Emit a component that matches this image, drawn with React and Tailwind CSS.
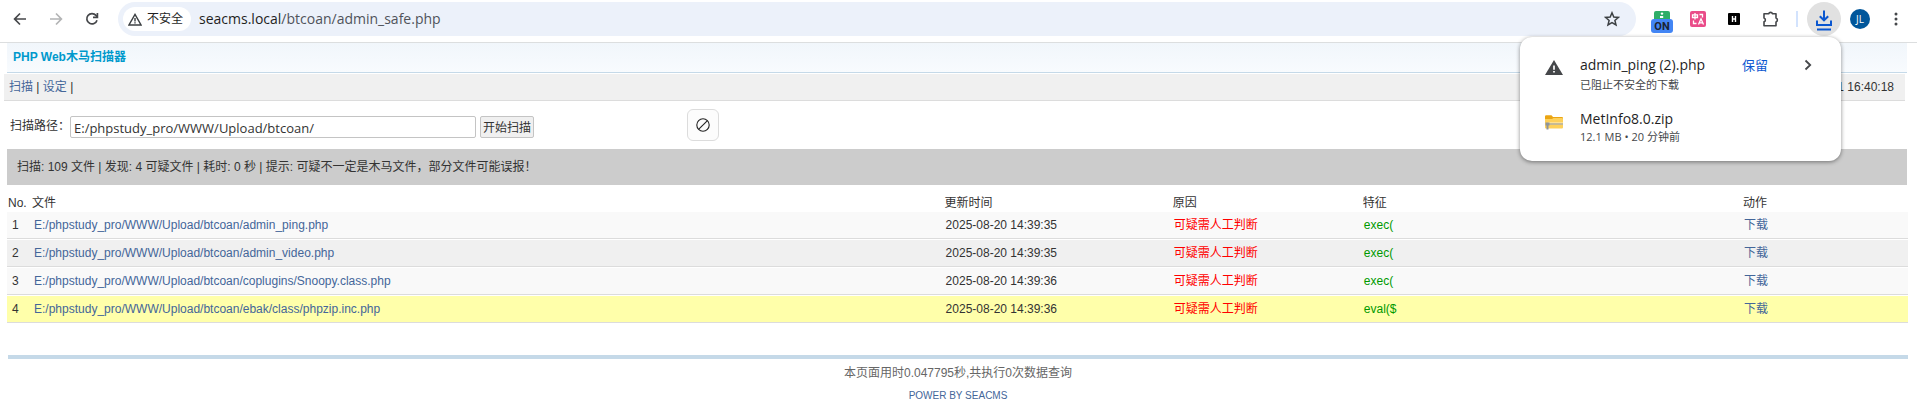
import React from "react";

const UI = "font-['Open_Sans','Noto_Sans_CJK_SC',sans-serif]";

const rows = [
  { no: 1, file: "E:/phpstudy_pro/WWW/Upload/btcoan/admin_ping.php", time: "2025-08-20 14:39:35", mark: "exec(", bg: "bg-[#f9f9f9]" },
  { no: 2, file: "E:/phpstudy_pro/WWW/Upload/btcoan/admin_video.php", time: "2025-08-20 14:39:35", mark: "exec(", bg: "bg-[#f0f0f0]" },
  { no: 3, file: "E:/phpstudy_pro/WWW/Upload/btcoan/coplugins/Snoopy.class.php", time: "2025-08-20 14:39:36", mark: "exec(", bg: "bg-[#f9f9f9]" },
  { no: 4, file: "E:/phpstudy_pro/WWW/Upload/btcoan/ebak/class/phpzip.inc.php", time: "2025-08-20 14:39:36", mark: "eval($", bg: "bg-[#ffffaa]" },
];

function ToolIcon({ label, children, className = "" }) {
  return (
    <button type="button" aria-label={label} className={`flex shrink-0 items-center justify-center ${className}`}>
      {children}
    </button>
  );
}

function Toolbar() {
  return (
    <header className={`flex h-[43px] items-start border-b border-[#dcdedf] bg-white pt-[2px] ${UI}`}>
      <nav className="flex h-[34px] shrink-0 items-center gap-4 pl-[10px] pr-4 text-[#45474a]">
        <ToolIcon label="后退" className="size-5">
          <svg width="14" height="14" viewBox="0 0 14 14" fill="none" stroke="currentColor" strokeWidth="1.7"><path d="M13 7H2M7 1.5 1.6 7 7 12.5" /></svg>
        </ToolIcon>
        <ToolIcon label="前进" className="size-5 text-[#b3b4b5]">
          <svg width="14" height="14" viewBox="0 0 14 14" fill="none" stroke="currentColor" strokeWidth="1.7"><path d="M1 7h11M7 1.5 12.4 7 7 12.5" /></svg>
        </ToolIcon>
        <ToolIcon label="重新加载" className="size-5">
          <svg width="14" height="14" viewBox="0 0 14 14" fill="none" stroke="currentColor" strokeWidth="1.7"><path d="M12 8.2A5.2 5.2 0 1 1 11 3.4L12.4 5" /><path d="M12.4 1v4.4H8" /></svg>
        </ToolIcon>
      </nav>
      <div className="flex h-[34px] min-w-0 grow items-center rounded-full bg-[#ecf1fa] pl-[5px] pr-4">
        <button type="button" className="flex h-6 shrink-0 items-center gap-[5px] rounded-full bg-white pl-[5px] pr-2 text-xs text-[#1f1f1f]">
          <svg width="14" height="13" viewBox="0 0 14 13" fill="none" stroke="#3c4043" strokeWidth="1.4" aria-hidden="true"><path d="M7 1.4 13 12H1Z" /><path d="M7 5v3.4M7 9.3v1.3" /></svg>
          <span>不安全</span>
        </button>
        <p className="ml-2 grow truncate text-sm text-[#50535a]"><span className="text-[#1f1f1f]">seacms.local</span>/btcoan/admin_safe.php</p>
        <ToolIcon label="收藏" className="size-4">
          <svg width="16" height="16" viewBox="0 0 16 16" fill="none" stroke="#3c4043" strokeWidth="1.5" strokeLinejoin="miter"><path d="m8 1.8 1.8 4.2 4.6.4-3.5 3 1.1 4.5L8 11.5l-4 2.4 1.1-4.5-3.5-3L6.2 6Z" /></svg>
        </ToolIcon>
      </div>
      <div className="flex h-[34px] shrink-0 items-center pl-[15px] pr-[13px]">
        <ToolIcon label="扩展 ON" className="mt-[6px] w-[22px]">
          <svg width="22" height="22" viewBox="0 0 22 22">
            <rect x="3" y="0" width="16" height="12" rx="2" fill="#2fae68" />
            <circle cx="11" cy="2.6" r="1.2" fill="#fff" /><path d="M9 5h3.2v2H9Z" fill="#fff" />
            <rect x="0" y="8" width="22" height="14" rx="3" fill="#4285f4" />
            <text x="11" y="19" textAnchor="middle" fontFamily="Roboto, sans-serif" fontSize="11" fontWeight="700" fill="#1b2330">ON</text>
          </svg>
        </ToolIcon>
        <ToolIcon label="翻译" className="ml-[17px] size-4">
          <svg width="16" height="16" viewBox="0 0 16 16" fill="none" stroke="#fff" strokeWidth="1.3">
            <rect width="16" height="16" rx="2" fill="#ea4c89" stroke="none" />
            <path d="M2.5 3.8h5v2.7h-5ZM5 2v6.500M9.500 3.500h3v3M3.500 9.500V12.500h3M8.500 13.500 11 7.800l2.500 5.700M9.400 11.800h3.300" />
          </svg>
        </ToolIcon>
        <ToolIcon label="H 扩展" className="ml-[22px] size-3">
          <svg width="12" height="12" viewBox="0 0 12 12"><rect width="12" height="12" rx="1" fill="#000" /><path d="M4.5 3v6M7.5 3v6M4.5 6h3" stroke="#fff" strokeWidth="1.4" /></svg>
        </ToolIcon>
        <ToolIcon label="扩展程序" className="ml-[22px] size-[18px]">
          <svg width="18" height="18" viewBox="0 0 18 18" fill="none" stroke="#45474a" strokeWidth="1.6" strokeLinejoin="round"><path d="M2 3.800h4.700a2 2 0 0 1 3.800 0H14v4.300a2 2 0 0 1 0 3.800v3.900H2v-4a2 2 0 0 0 0-3.800Z" /></svg>
        </ToolIcon>
        <span className="ml-4 h-4 w-[2px] shrink-0 bg-[#d3e3fd]" />
        <ToolIcon label="下载内容" className="ml-[9px] size-[34px] rounded-full bg-[#e1e1e1]">
          <svg width="18" height="22" viewBox="0 0 18 22" fill="none" stroke="#0b57d0" strokeWidth="2" className="mt-1"><path d="M9 .5v9.500M4.800 6.200 9 10.300l4.200-4.100M2 10.500v4.500h14v-4.500M2 19.500h14" /></svg>
        </ToolIcon>
        <ToolIcon label="用户 JL" className="ml-[9px] size-5 rounded-full bg-[#01579b] text-[10px] leading-none text-white">JL</ToolIcon>
        <ToolIcon label="菜单" className="ml-[18px] size-4">
          <svg width="4" height="14" viewBox="0 0 4 14" fill="#45474a"><circle cx="2" cy="2" r="1.5" /><circle cx="2" cy="7" r="1.5" /><circle cx="2" cy="12" r="1.5" /></svg>
        </ToolIcon>
      </div>
    </header>
  );
}

function Downloads() {
  return (
    <aside aria-label="下载内容" className={`absolute right-[76px] top-[37px] w-[321px] rounded-xl bg-white pb-4 pl-[25px] pr-[25px] pt-[18px] text-[#1f1f1f] shadow-[0_1px_4px_rgba(0,0,0,0.45)] ${UI}`}>
      <div className="flex">
        <svg width="18" height="15" viewBox="0 0 18 15" className="mt-[5px] shrink-0" aria-hidden="true"><path d="M9 0 18 15H0Z" fill="#45474a" /><path d="M9 5.5v4.200M9 11v1.600" stroke="#fff" strokeWidth="1.7" /></svg>
        <div className="ml-[17px] grow">
          <p className="text-sm leading-5">admin_ping (2).php</p>
          <p className="text-[11px] leading-5 text-[#45474a]">已阻止不安全的下载</p>
        </div>
        <button type="button" className="h-5 text-[13px] leading-5 text-[#0b57d0]">保留</button>
        <button type="button" aria-label="详情" className="ml-8 flex h-5 w-4 items-center justify-center">
          <svg width="8" height="12" viewBox="0 0 8 12" fill="none" stroke="#45474a" strokeWidth="1.8"><path d="m1.5 1.5 4.700 4.500-4.700 4.500" /></svg>
        </button>
      </div>
      <div className="mt-[14px] flex">
        <svg width="18" height="15" viewBox="0 0 18 15" className="mt-[6px] shrink-0" aria-hidden="true">
          <path d="M0 1.5Q0 .3 1.200.3H6.500L8 2h9a1 1 0 0 1 1 1v2H0Z" fill="#eba512" />
          <path d="M0 4h7l1.500-1H17a1 1 0 0 1 1 1v8.500a1 1 0 0 1-1 1H1a1 1 0 0 1-1-1Z" fill="#fdd05a" />
          <path d="M3 8.700h15" stroke="#fff1c4" strokeWidth="2.400" /><path d="M3 9h15" stroke="#8b8570" strokeWidth="1" />
          <path d="M.500 7.500H4.500v3H3.500V14.500H1.500V10.500H.500Z" fill="#8e9499" />
        </svg>
        <div className="ml-[17px]">
          <p className="text-sm leading-5">MetInfo8.0.zip</p>
          <p className="text-[11px] leading-4 text-[#45474a]">12.1 MB • 20 分钟前</p>
        </div>
      </div>
    </aside>
  );
}

export default function App() {
  return (
    <div className="relative min-h-screen bg-white font-['Liberation_Sans','Noto_Sans_CJK_SC',sans-serif] text-xs text-[#333]">
      <Toolbar />
      <main>
        <h1 className="ml-[7px] mr-[10px] flex h-[30px] items-center border-b border-[#c5d9e8] bg-linear-to-b from-[#f1f6fb] to-[#f8fbfe] px-[6px] pb-[2px] font-bold text-[#0099cc]">PHP Web木马扫描器</h1>
        <div className="ml-1 mr-3 mt-px flex h-[27px] items-center justify-between border-b border-[#dcdcdc] bg-[#f0f0f0] pl-[5px] pr-[11px]">
          <nav>
            <a href="#scan" className="text-[#446699]">扫描</a> | <a href="#setting" className="text-[#446699]">设定</a> |
          </nav>
          <time>2025-08-21 16:40:18</time>
        </div>
        <form className="flex h-12 items-center pl-[10px]" onSubmit={(e) => e.preventDefault()}>
          <label htmlFor="path" className="w-[60px] shrink-0 whitespace-nowrap pt-[2px]">扫描路径：</label>
          <input id="path" type="text" defaultValue="E:/phpstudy_pro/WWW/Upload/btcoan/" className={`mt-[7px] mb-1 h-[22px] w-[406px] rounded-[2px] border border-[#c4c4c4] px-[3px] pt-[2px] text-[13px] text-[#333] ${UI}`} />
          <button type="submit" className="mt-[7px] mb-1 ml-1 h-[22px] rounded-[2px] border border-[#c4c4c4] bg-[#f0f0f0] px-[2px] pt-[2px] text-xs">开始扫描</button>
          <button type="button" aria-label="禁用" className="ml-[153px] flex size-8 items-center justify-center rounded-md border border-[#dcdcdc] bg-[#fcfcfc]">
            <svg width="14" height="14" viewBox="0 0 14 14" fill="none" stroke="#222" strokeWidth="1.1"><circle cx="7" cy="7" r="6.2" /><path d="m2.8 11.200 8.400-8.400" /></svg>
          </button>
        </form>
        <p className="ml-[7px] mr-[10px] flex h-9 items-center bg-[#cccccc] px-[10px]">扫描: 109 文件 | 发现: 4 可疑文件 | 耗时: 0 秒 | 提示: 可疑不一定是木马文件，部分文件可能误报！</p>
        <div className="ml-[7px] mr-[9px]">
          <table className="w-full table-fixed border-separate border-spacing-0 text-left">
            <colgroup>
              <col className="w-6" /><col /><col className="w-[12%]" /><col className="w-[10%]" /><col className="w-[20%]" /><col className="w-[166px]" />
            </colgroup>
            <thead>
              <tr>
                {["No.", "文件", "更新时间", "原因", "特征", "动作"].map((h) => (
                  <th key={h} scope="col" className="h-[26px] whitespace-nowrap px-px pb-0 pt-[10px] font-normal leading-4">{h}</th>
                ))}
              </tr>
            </thead>
            <tbody>
              {rows.map((r) => (
                <tr key={r.no} className={`${r.bg} [&>td]:h-7 [&>td]:border-b [&>td]:border-t [&>td]:border-b-[#dcdcdc] [&>td]:border-t-white [&>td]:px-[2px]`}>
                  <td><span className="ml-[3px]">{r.no}</span></td>
                  <td><a href="#file" className="ml-px text-[#446699]">{r.file}</a></td>
                  <td>{r.time}</td>
                  <td className="text-[#ff0000]">可疑需人工判断</td>
                  <td className="text-[#009900]">{r.mark}</td>
                  <td><a href="#download" className="text-[#446699]">下载</a></td>
                </tr>
              ))}
            </tbody>
          </table>
        </div>
      </main>
      <footer className="ml-2 mr-[9px] mt-8 border-t-4 border-[#c5d9e8] pt-1 text-center text-[#666]">
        <p className="leading-5">本页面用时0.047795秒,共执行0次数据查询</p>
        <a href="#seacms" className="mt-[3px] block text-[10px] leading-5 text-[#446699]">POWER BY SEACMS</a>
      </footer>
      <Downloads />
    </div>
  );
}
